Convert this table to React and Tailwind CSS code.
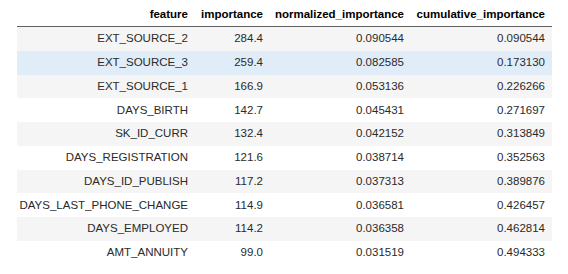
import React from "react";

const rows = [
  ["EXT_SOURCE_2", "284.4", "0.090544", "0.090544"],
  ["EXT_SOURCE_3", "259.4", "0.082585", "0.173130"],
  ["EXT_SOURCE_1", "166.9", "0.053136", "0.226266"],
  ["DAYS_BIRTH", "142.7", "0.045431", "0.271697"],
  ["SK_ID_CURR", "132.4", "0.042152", "0.313849"],
  ["DAYS_REGISTRATION", "121.6", "0.038714", "0.352563"],
  ["DAYS_ID_PUBLISH", "117.2", "0.037313", "0.389876"],
  ["DAYS_LAST_PHONE_CHANGE", "114.9", "0.036581", "0.426457"],
  ["DAYS_EMPLOYED", "114.2", "0.036358", "0.462814"],
  ["AMT_ANNUITY", "99.0", "0.031519", "0.494333"],
];

const cols = "grid grid-cols-[178px_75px_141px_141px]";

export default function App() {
  return (
    <div
      className="w-[568px] h-[274px] bg-white text-[11.5px] text-[#2a2a2a]"
      style={{ fontFamily: '"Liberation Sans", Arial, sans-serif' }}
    >
      <div className="ml-[17px] w-[535px]">
        <div className={`${cols} h-[27px] pt-[4px] border-b border-[#606060] font-bold text-black`}>
          <div className="flex items-center justify-end pr-[7px]">feature</div>
          <div className="flex items-center justify-end pr-[7px]">importance</div>
          <div className="flex items-center justify-end pr-[7px]">normalized_importance</div>
          <div className="flex items-center justify-end pr-[7px]">cumulative_importance</div>
        </div>
        {rows.map((r, i) => (
          <div
            key={i}
            className={`${cols} h-[23.75px] ${
              i === 1 ? "bg-[#e0edf9]" : i % 2 === 0 ? "bg-[#f5f5f5]" : "bg-white"
            }`}
          >
            {r.map((c, j) => (
              <div key={j} className="flex items-center justify-end pr-[7px]">
                {c}
              </div>
            ))}
          </div>
        ))}
      </div>
    </div>
  );
}
